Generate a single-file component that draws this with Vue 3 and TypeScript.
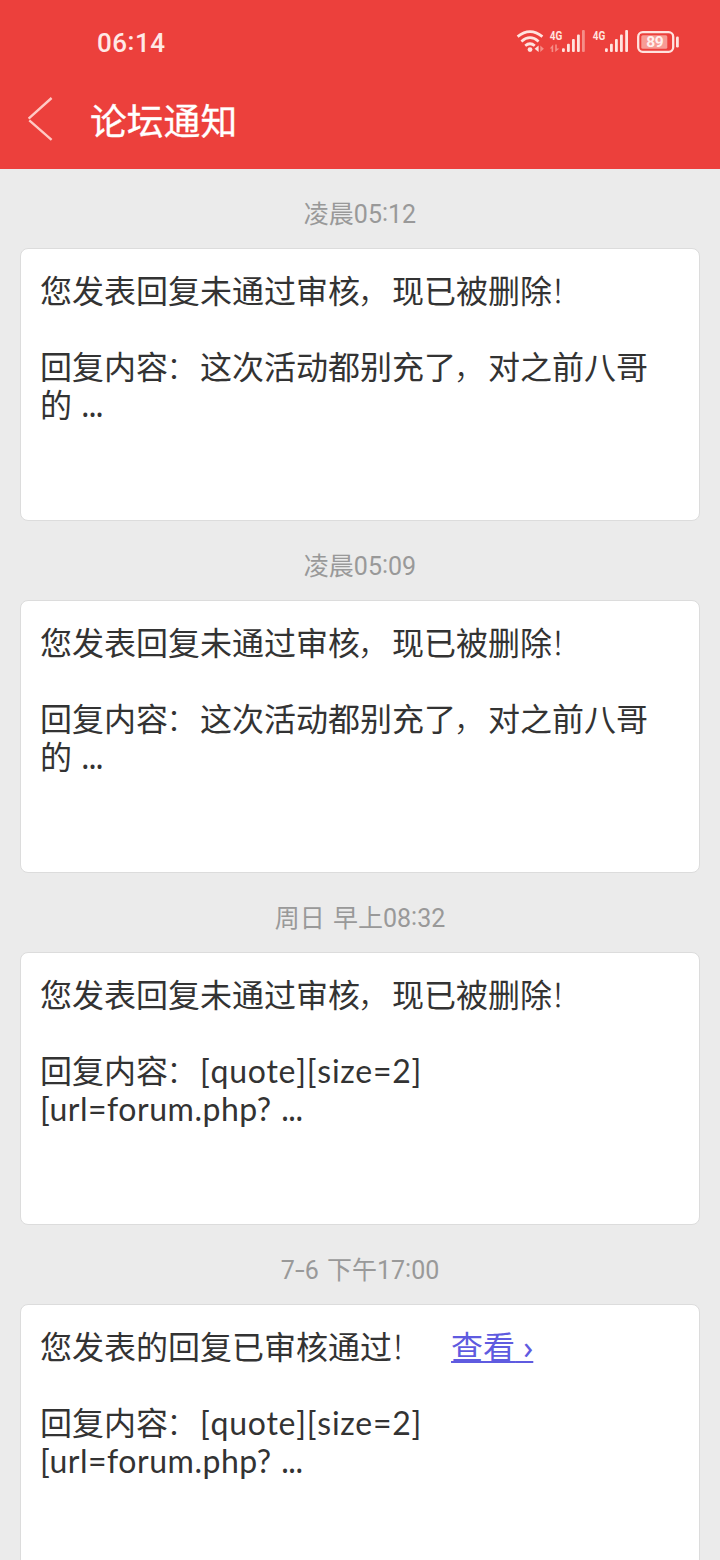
<script setup lang="ts">
interface Notice {
  day: string
  time: string
  title: string
  body: string
  latin?: string[]
  tail?: string
  link?: boolean
}

const rejected = '您发表回复未通过审核，现已被删除！'
const notices: Notice[] = [
  { day: '凌晨', time: '05:12', title: rejected, body: '回复内容：这次活动都别充了，对之前八哥', tail: '的' },
  { day: '凌晨', time: '05:09', title: rejected, body: '回复内容：这次活动都别充了，对之前八哥', tail: '的' },
  { day: '周日 早上', time: '08:32', title: rejected, body: '回复内容：', latin: ['[quote][size=2]', '[url=forum.php?'] },
  { day: '7-6 下午', time: '17:00', title: '您发表的回复已审核通过！', body: '回复内容：', latin: ['[quote][size=2]', '[url=forum.php?'], link: true },
]

const punctuation: Record<string, string> = { '，': 'comma', '！': 'bang', '：': 'colon', '-': 'dash' }
const split = (s: string): string[] => s.split(/([，！：-])/).filter(Boolean)
</script>

<template>
  <div class="screen">
    <header class="top">
      <div class="status">
        <span class="clock">06<i>:</i>14</span>
        <svg class="signals" width="170" height="30" viewBox="510 27 170 30">
          <g fill="none" stroke="#ffe3df" stroke-width="2.7">
            <path d="M517.6 36.6Q530 26.5 542.4 36.6" />
            <path d="M521.4 41.4Q530 34 538.6 41.4" />
            <path d="M525.2 45.7Q530 41.8 534.8 45.7" />
          </g>
          <circle cx="530" cy="49.6" r="2.4" fill="#ffe3df" />
          <path d="M534.6 48.8l4-3.3v6.6z" fill="#ffe3df" />
          <path d="M540.3 45.5l3.6 3.3-3.6 3.3z" fill="#f58e88" />
          <g fill="#ffe3df">
            <text class="net" x="549.8" y="40" textLength="12.5" lengthAdjust="spacingAndGlyphs">4G</text>
            <text class="net" x="592.8" y="40" textLength="12.5" lengthAdjust="spacingAndGlyphs">4G</text>
            <rect x="562" y="48.3" width="2.8" height="3.7" rx="1" />
            <rect x="567" y="43.7" width="2.8" height="8.3" rx="1" />
            <rect x="572" y="39" width="2.8" height="13" rx="1" />
            <rect x="577" y="34.5" width="2.8" height="17.5" rx="1" />
            <rect x="605" y="48.3" width="2.8" height="3.7" rx="1" />
            <rect x="610" y="43.7" width="2.8" height="8.3" rx="1" />
            <rect x="615" y="39" width="2.8" height="13" rx="1" />
            <rect x="620" y="34.5" width="2.8" height="17.5" rx="1" />
            <rect x="625.2" y="30" width="2.8" height="22" rx="1" />
            <rect x="676" y="36.5" width="2.8" height="11" rx="1.2" />
          </g>
          <g fill="#f58e88">
            <rect x="582" y="30" width="2.8" height="22" rx="1" />
            <path d="M549.8 48.5l3.4-4v7.5h-1.6v-3.5zM555.2 44.5h1.6v4h2.6l-4.2 3.5z" />
          </g>
          <rect x="638.2" y="32.2" width="35" height="19.6" rx="4.5" fill="none" stroke="#ffe3df" stroke-width="2.3" />
          <rect x="641.3" y="35.3" width="26" height="13.4" rx="1.5" fill="#f79c95" />
          <text class="charge" x="655" y="47.4" text-anchor="middle" textLength="17.5">89</text>
        </svg>
      </div>
      <div class="bar">
        <svg class="back" width="28" height="46" viewBox="0 0 28 46">
          <path d="M24.6 2L1.6 22.6M2.3 24.4L24.6 43.8" fill="none" stroke="#ffc9c4" stroke-width="2.4" />
        </svg>
        <h1>论坛通知</h1>
      </div>
    </header>

    <main>
      <section v-for="(n, i) in notices" :key="i">
        <time><span v-for="(s, k) in split(n.day)" :key="k" :class="punctuation[s]">{{ s }}</span><span>{{ n.time.slice(0, 2) }}<i>:</i>{{ n.time.slice(3) }}</span></time>
        <article>
          <p><span v-for="(s, k) in split(n.title)" :key="k" :class="punctuation[s]">{{ s }}</span><a v-if="n.link" class="view">查看<span class="arrow">&nbsp;›</span></a></p>
          <p class="detail"><span v-for="(s, k) in split(n.body)" :key="k" :class="punctuation[s]">{{ s }}</span><span v-if="n.latin" class="quote">{{ n.latin[0] }}</span></p>
          <p>{{ n.tail }}<span v-if="n.latin" class="url">{{ n.latin[1] }}</span><span class="dots">...</span></p>
        </article>
      </section>
    </main>
  </div>
</template>

<style>
body {
  margin: 0;
  background: #ebebeb;
}
</style>

<style scoped>
.screen {
  width: 720px;
  height: 1560px;
  overflow: hidden;
  background: #ebebeb;
  font-family: "Noto Sans CJK SC", sans-serif;
}
.top {
  height: 169px;
  background: #ec403c;
  color: #fff;
}
.status {
  display: flex;
  justify-content: space-between;
  height: 84px;
  padding: 0 40px 0 97px;
}
.clock {
  margin-top: 27px;
  font: 500 26px/32px Roboto, sans-serif;
  letter-spacing: 0.5px;
  color: #ffe9e6;
}
i {
  display: inline-block;
  font-style: normal;
  line-height: 1;
  transform: translateY(-2px);
}
.signals {
  margin-top: 27px;
}
.net {
  font: 700 13px Roboto, sans-serif;
}
.charge {
  font: 700 15.5px Roboto, sans-serif;
  fill: #fff0ee;
}
.bar {
  display: flex;
  height: 70px;
  padding-left: 27px;
}
.back {
  margin-top: 12px;
}
h1 {
  margin: 9px 0 0 35px;
  font-size: 36.8px;
  line-height: 52px;
  font-weight: 400;
  -webkit-text-stroke: 0.3px #fff;
}
section {
  height: 352px;
}
time {
  display: flex;
  justify-content: center;
  height: 79px;
  box-sizing: border-box;
  padding-top: 26px;
  font-family: Roboto, "Noto Sans CJK SC", sans-serif;
  font-size: 25px;
  line-height: 40px;
  word-spacing: 2px;
  color: #999;
  white-space: pre;
}
.dash {
  padding: 0 1.5px;
  transform: scaleX(1.4);
}
article {
  box-sizing: border-box;
  height: 273px;
  margin: 0 20px;
  padding: 21px 19px 0;
  border: 1px solid #dcdcdc;
  border-radius: 8px;
  background: #fff;
}
p {
  margin: 0;
  font-size: 32px;
  line-height: 38px;
  height: 38px;
  color: #333;
  white-space: nowrap;
}
.detail {
  margin-top: 38px;
}
.comma,
.bang,
.colon {
  display: inline-block;
  line-height: 1;
  font-weight: 300;
}
.comma,
.bang,
.colon {
  transform: translateX(-2px);
}
.quote,
.url {
  font-family: Lato, sans-serif;
  line-height: 1;
  letter-spacing: 0.75px;
}
.url {
  letter-spacing: 0.53px;
}
.dots {
  margin-left: 9px;
  font-family: "Noto Sans", sans-serif;
  line-height: 1;
  letter-spacing: -1.4px;
}
.view {
  margin-left: 27px;
  color: #5f5be0;
  text-decoration: underline;
  text-decoration-thickness: 2px;
  text-decoration-skip-ink: none;
  text-underline-offset: 2px;
}
.arrow {
  font-family: "Noto Sans", sans-serif;
  line-height: 1;
}
</style>
